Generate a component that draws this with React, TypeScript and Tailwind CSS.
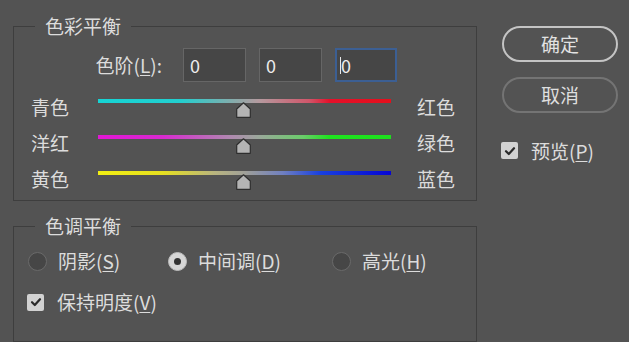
import React from "react";

const sliders = [
  {
    l: "青色",
    r: "红色",
    g: "bg-[linear-gradient(to_right,#16d4d4_0%,#22cfcf_28%,#8fa8a8_48%,#b59a9f_55%,#d0566a_72%,#e5102a_79%,#e40f1c_100%)]",
  },
  {
    l: "洋红",
    r: "绿色",
    g: "bg-[linear-gradient(to_right,#e216d6_0%,#d82ad0_22%,#b088b0_45%,#9aa89a_55%,#6acd6a_70%,#1ee31e_79%,#1de01d_100%)]",
  },
  {
    l: "黄色",
    r: "蓝色",
    g: "bg-[linear-gradient(to_right,#f2ef12_0%,#e6e020_22%,#b8b480_40%,#a0a098_50%,#7080c0_63%,#1840e0_76%,#0606d4_100%)]",
  },
];

function Thumb() {
  return (
    <svg
      className="absolute left-[138px] top-[3px]"
      width="15"
      height="16"
      viewBox="0 0 15 16"
    >
      <polygon
        points="7.5,0.8 14.3,7 14.3,15.3 0.7,15.3 0.7,7"
        fill="#b4b4b4"
        stroke="#2e2e2e"
        strokeWidth="1.2"
        strokeLinejoin="round"
      />
    </svg>
  );
}

function Check() {
  return (
    <span className="w-[17px] h-[17px] rounded-[2px] bg-[#d2d2d2] flex items-center justify-center">
      <svg width="12" height="12" viewBox="0 0 12 12">
        <path
          d="M2 6.2 L4.8 9 L10 3.2"
          fill="none"
          stroke="#2a2a2a"
          strokeWidth="2.2"
          strokeLinecap="round"
          strokeLinejoin="round"
        />
      </svg>
    </span>
  );
}

function Radio({ on }: { on?: boolean }) {
  return on ? (
    <span className="w-[19px] h-[19px] rounded-full bg-[#d6d6d6] border border-[#bdbdbd] flex items-center justify-center">
      <span className="w-[7px] h-[7px] rounded-full bg-[#333333]" />
    </span>
  ) : (
    <span className="w-[19px] h-[19px] rounded-full bg-[#464646] border border-[#6a6a6a]" />
  );
}

export default function App() {
  return (
    <div className="w-[629px] h-[342px] overflow-hidden bg-[#535353] text-[#dcdcdc] font-['Noto_Sans_CJK_SC','Noto_Sans',sans-serif] text-[19px] flex pl-[13px] pt-[26px]">
      <div className="w-[464px] flex flex-col shrink-0">
        <div className="relative border border-[#3e3e3e] h-[177px] pt-[21px]">
          <span className="absolute -top-[13px] left-[21px] px-[10px] bg-[#535353] leading-[24px]">
            色彩平衡
          </span>
          <div className="flex items-center h-[34px]">
            <span className="w-[151px] pr-[3px] text-right leading-[24px]">
              色阶(<span className="underline underline-offset-2">L</span>):
            </span>
            <div className="ml-[18px] w-[63px] h-[34px] bg-[#464646] border border-[#666666] pl-[6px] text-[18px] leading-[32px] text-[#ececec]">
              0
            </div>
            <div className="ml-[13px] w-[63px] h-[34px] bg-[#464646] border border-[#666666] pl-[6px] text-[18px] leading-[32px] text-[#ececec]">
              0
            </div>
            <div className="ml-[13px] w-[62px] h-[34px] bg-[#464646] border-2 border-[#3c5f93] pl-[3px] text-[18px] leading-[30px] text-[#ececec] flex items-center">
              <span className="w-[1px] h-[17px] bg-[#e8e8e8]" />
              <span>0</span>
            </div>
          </div>
          <div className="mt-[10px] flex flex-col">
            {sliders.map((s) => (
              <div key={s.l} className="flex items-start h-[36px]">
                <span className="w-[84px] pl-[17px] mt-[5px] leading-[20px]">{s.l}</span>
                <div className={`relative w-[293px] h-[4px] mt-[7px] ${s.g}`}>
                  <Thumb />
                </div>
                <span className="ml-[26px] mt-[5px] leading-[20px]">{s.r}</span>
              </div>
            ))}
          </div>
        </div>
        <div className="relative mt-[25px] border border-[#3e3e3e] h-[200px] pt-[22px]">
          <span className="absolute -top-[13px] left-[21px] px-[10px] bg-[#535353] leading-[24px]">
            色调平衡
          </span>
          <div className="flex items-center h-[24px] pl-[14px]">
            <div className="w-[140px] flex items-center gap-[11px]">
              <Radio />
              <span className="leading-[24px]">
                阴影(<span className="underline underline-offset-2">S</span>)
              </span>
            </div>
            <div className="w-[164px] flex items-center gap-[11px]">
              <Radio on />
              <span className="leading-[24px]">
                中间调(<span className="underline underline-offset-2">D</span>)
              </span>
            </div>
            <div className="flex items-center gap-[11px]">
              <Radio />
              <span className="leading-[24px]">
                高光(<span className="underline underline-offset-2">H</span>)
              </span>
            </div>
          </div>
          <div className="mt-[17px] flex items-center h-[24px] pl-[13px] gap-[13px]">
            <Check />
            <span className="leading-[24px]">
              保持明度(<span className="underline underline-offset-2">V</span>)
            </span>
          </div>
        </div>
      </div>
      <div className="ml-[25px] w-[116px] flex flex-col shrink-0">
        <button className="h-[36px] rounded-full border-2 border-[#c4c4c4] text-[#e2e2e2] leading-[32px] text-center">
          确定
        </button>
        <button className="mt-[15px] h-[36px] rounded-full border-2 border-[#747474] text-[#dedede] leading-[32px] text-center">
          取消
        </button>
        <div className="mt-[29px] -ml-[1px] flex items-center h-[17px] gap-[13px]">
          <Check />
          <span className="leading-[24px]">
            预览(<span className="underline underline-offset-2">P</span>)
          </span>
        </div>
      </div>
    </div>
  );
}
